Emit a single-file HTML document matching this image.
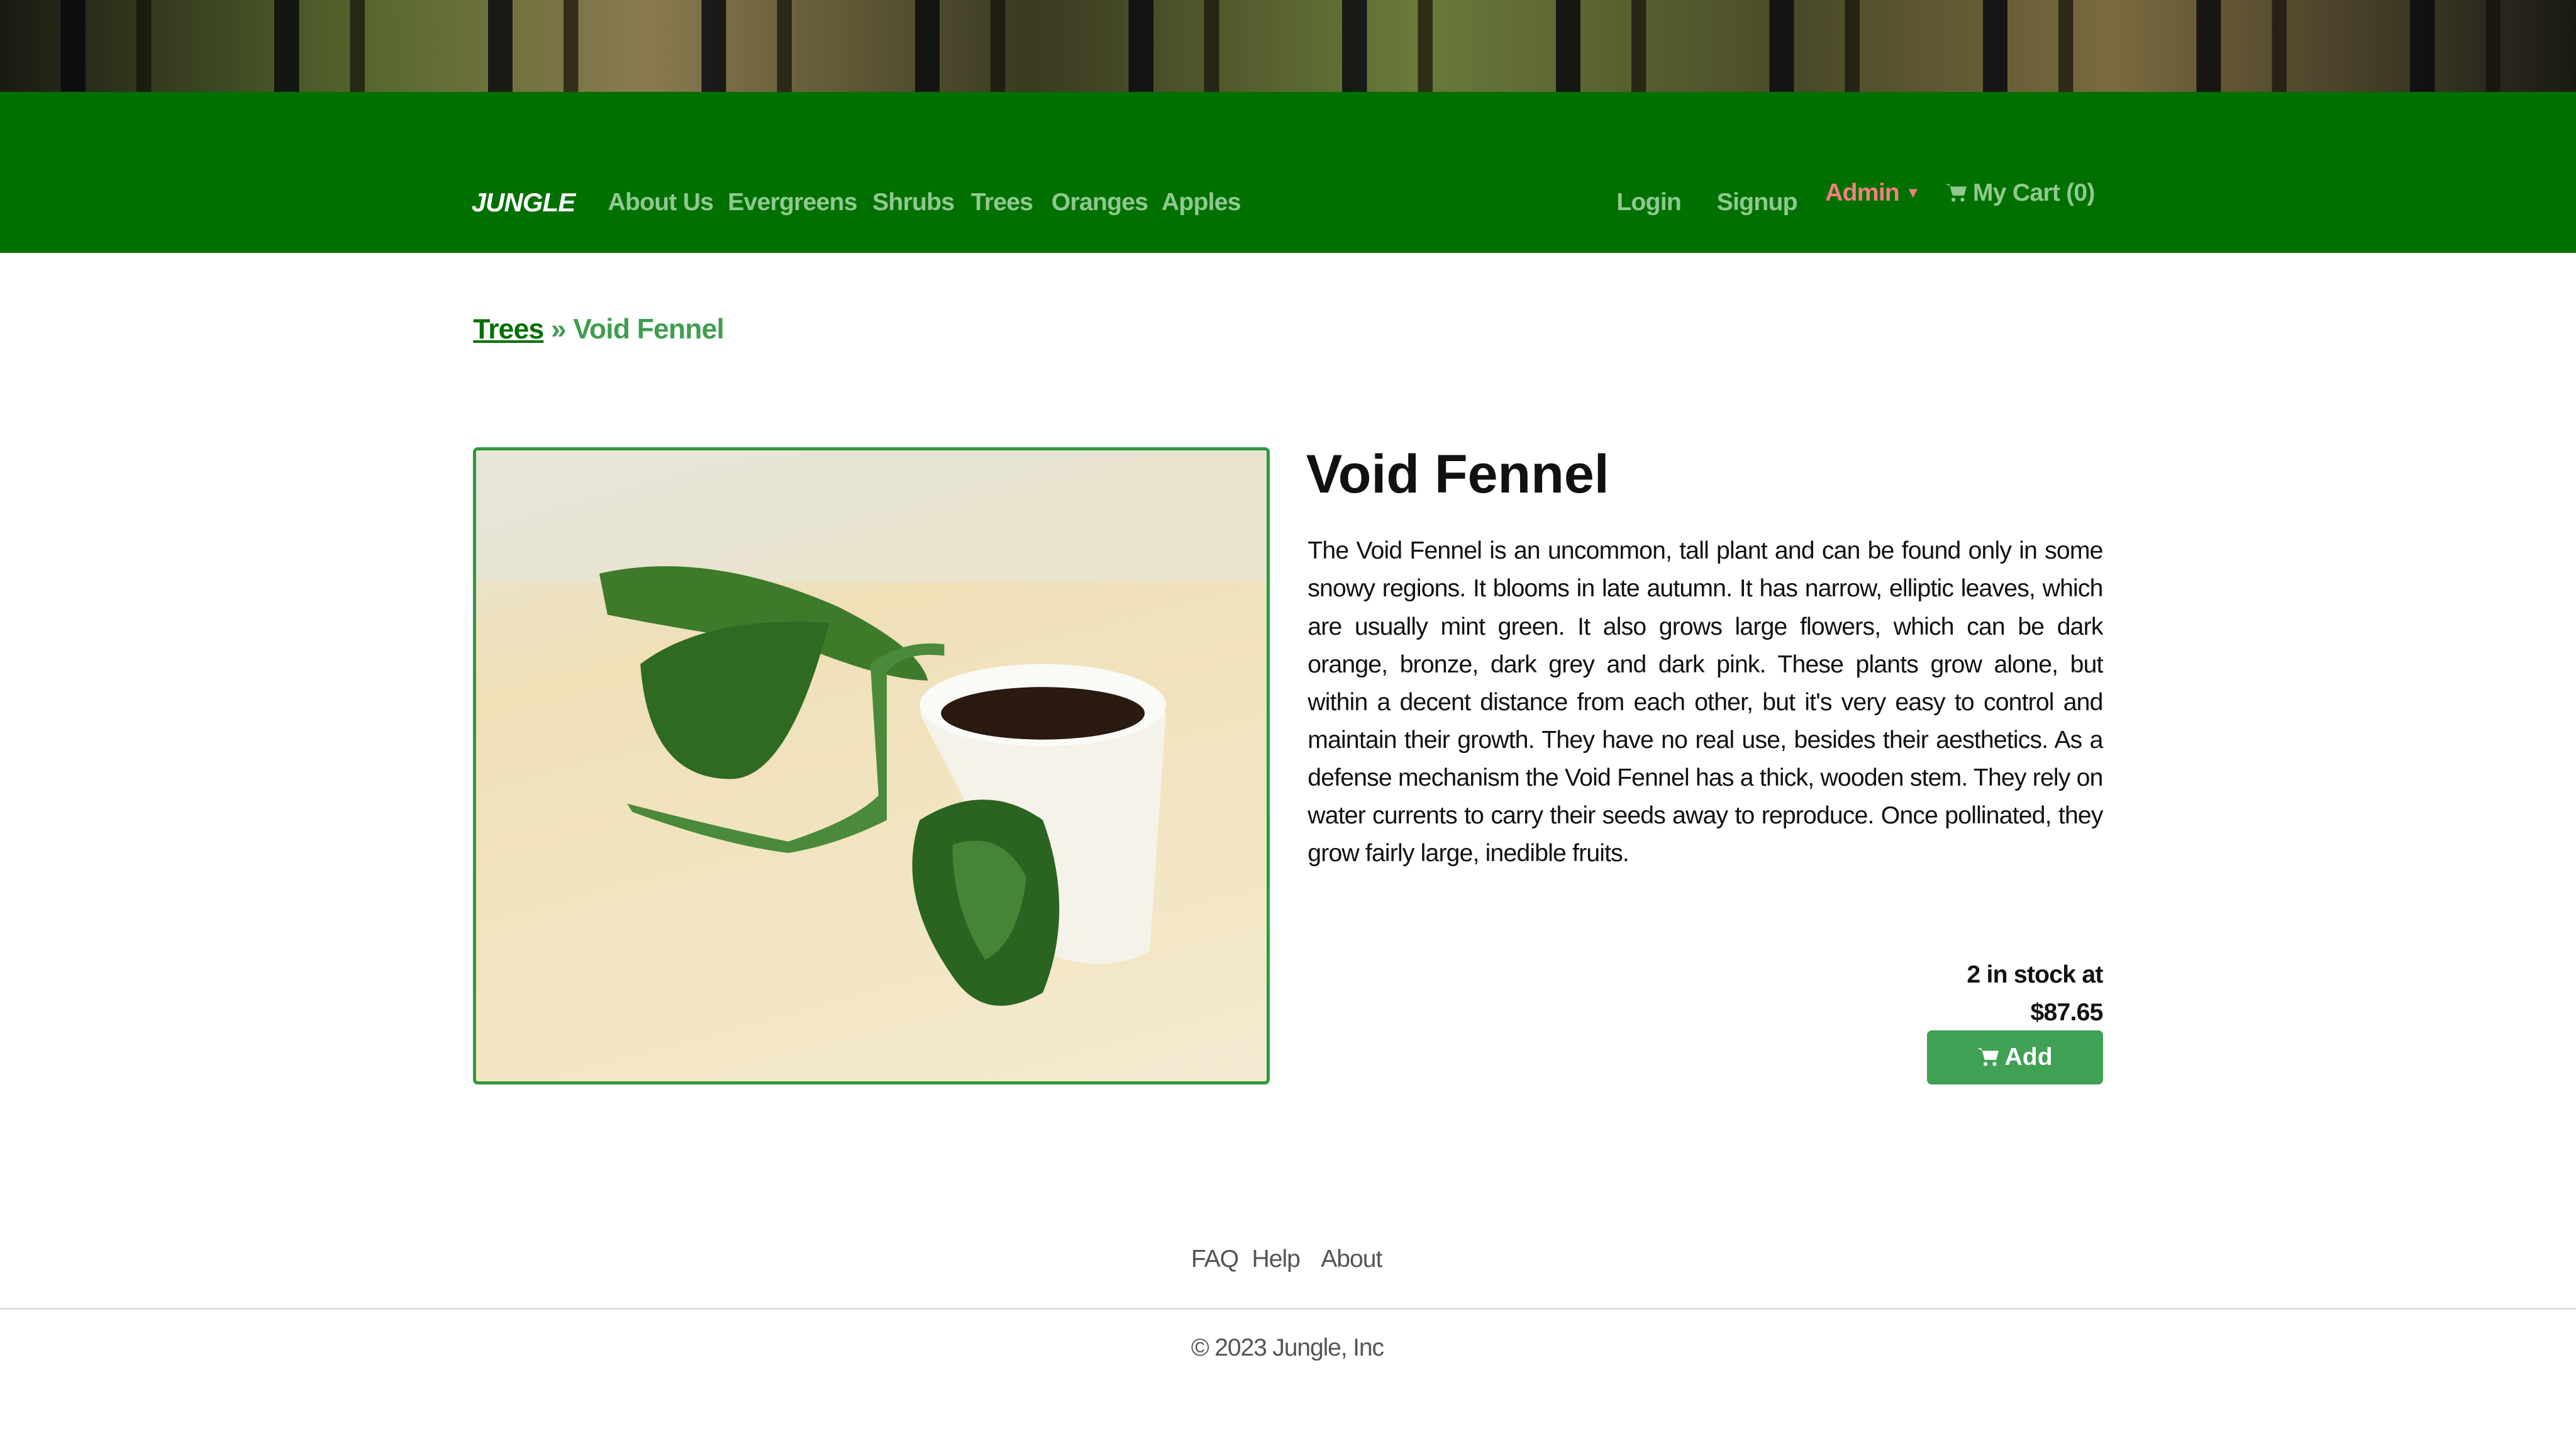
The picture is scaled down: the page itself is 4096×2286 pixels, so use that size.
<!DOCTYPE html>
<html><head><meta charset="utf-8"><style>
html,body{margin:0;padding:0;background:#fff}
body{width:4096px;height:2286px;overflow:hidden}
#w{zoom:2.6122;width:1568px;height:875px;position:relative;font-family:"Liberation Sans",sans-serif}
.a{position:absolute;white-space:nowrap}
#forest{position:absolute;left:0;top:0;width:1568px;height:56px;background:
repeating-linear-gradient(90deg,rgba(0,0,0,0) 0 37px,rgba(10,10,15,.85) 37px 52px,rgba(0,0,0,0) 52px 83px,rgba(20,15,10,.7) 83px 92px,rgba(0,0,0,0) 92px 130px),
linear-gradient(90deg,#1a1a12,#5a6a30 15%,#8a7a50 25%,#3a3a20 40%,#6a7a3a 55%,#4a4a28 70%,#7a6a40 82%,#1a1a14)}
#nav{position:absolute;left:0;top:56px;width:1568px;height:98px;background:#007000}
.n{color:#8fc98f;font-weight:bold;font-size:15px;top:115px;letter-spacing:-0.3px}
.p{font-size:15px;line-height:23px;color:#111;text-align:justify;width:484px;letter-spacing:-0.32px}
.f{font-size:15px;color:#555;letter-spacing:-0.4px;top:758px}
</style></head><body><div id="w">
<div id="forest"></div>
<div id="nav"></div>
<div class="a" style="left:287px;top:114px;color:#fff;font-weight:900;font-style:italic;font-size:16px;letter-spacing:-0.3px">JUNGLE</div>
<div class="a n" style="left:370px">About Us</div>
<div class="a n" style="left:443px">Evergreens</div>
<div class="a n" style="left:531px">Shrubs</div>
<div class="a n" style="left:591px">Trees</div>
<div class="a n" style="left:640px">Oranges</div>
<div class="a n" style="left:707px">Apples</div>
<div class="a n" style="left:984px">Login</div>
<div class="a n" style="left:1045px">Signup</div>
<div class="a n" style="left:1111px;top:109px;color:#f08080">Admin <span style="font-size:9px;vertical-align:2px">▼</span></div>
<div class="a n" style="left:1184px;top:109px"><svg width="13" height="12" viewBox="0 0 13 12" style="vertical-align:-1px"><path d="M0 1h2.5l2 7h7l1.5-5.5H3.5" fill="#8fc98f"/><circle cx="5" cy="10.5" r="1.2" fill="#8fc98f"/><circle cx="10.5" cy="10.5" r="1.2" fill="#8fc98f"/></svg> My Cart (0)</div>
<div class="a" style="left:288px;top:191px;font-size:17px;font-weight:bold;color:#3e9e50;letter-spacing:-0.3px"><span style="color:#007000;text-decoration:underline">Trees</span> » Void Fennel</div>
<div class="a" style="left:288px;top:272px;width:481px;height:384px;border:2px solid #2e9a3e;border-radius:3px;overflow:hidden;background:linear-gradient(165deg,#e8e4d4 0%,#efe0b8 30%,#f2e4c0 60%,#f4ead0 100%)">
<svg width="484" height="387" viewBox="0 0 484 387">
<rect x="0" y="0" width="484" height="80" fill="#e4e6dc" opacity=".6"/>
<path d="M270 160 Q330 140 420 160 L410 305 Q380 320 345 305 Z" fill="#f5f2ea"/>
<ellipse cx="345" cy="155" rx="75" ry="25" fill="#fafaf6"/>
<ellipse cx="345" cy="160" rx="62" ry="16" fill="#2a1a10"/>
<path d="M75 75 Q140 60 220 95 Q270 120 275 140 Q250 140 200 120 Q130 110 80 100 Z" fill="#3e7a2a"/>
<path d="M100 130 Q140 100 215 105 Q190 200 155 200 Q105 200 100 130 Z" fill="#2e6a22"/>
<path d="M240 130 Q260 115 285 118 L285 125 Q260 122 250 135 L250 225 Q220 240 190 245 Q150 240 95 220 L92 215 Q150 230 190 238 Q230 225 245 210 Z" fill="#4a8a3a"/>
<path d="M270 225 Q310 200 345 225 Q365 280 345 330 Q310 350 290 320 Q255 270 270 225 Z" fill="#2a6420"/>
<path d="M290 240 Q320 230 335 260 Q330 300 310 310 Q290 280 290 240 Z" fill="#5a9a4a" opacity=".6"/>
</svg></div>
<div class="a" style="left:795px;top:270px;font-size:33px;font-weight:bold;color:#111">Void Fennel</div>
<div class="a p" style="left:796px;top:324px;white-space:normal">The Void Fennel is an uncommon, tall plant and can be found only in some snowy regions. It blooms in late autumn. It has narrow, elliptic leaves, which are usually mint green. It also grows large flowers, which can be dark orange, bronze, dark grey and dark pink. These plants grow alone, but within a decent distance from each other, but it's very easy to control and maintain their growth. They have no real use, besides their aesthetics. As a defense mechanism the Void Fennel has a thick, wooden stem. They rely on water currents to carry their seeds away to reproduce. Once pollinated, they grow fairly large, inedible fruits.</div>
<div class="a" style="right:288px;top:582px;font-size:15px;font-weight:bold;color:#111;text-align:right;line-height:23px;letter-spacing:-0.3px">2 in stock at<br>$87.65</div>
<div class="a" style="left:1173px;top:627px;width:107px;height:33px;background:#40a054;border-radius:3px;color:#fff;font-weight:bold;font-size:15px;text-align:center;line-height:33px"><svg width="13" height="12" viewBox="0 0 13 12" style="vertical-align:-1px"><path d="M0 1h2.5l2 7h7l1.5-5.5H3.5" fill="#fff"/><circle cx="5" cy="10.5" r="1.2" fill="#fff"/><circle cx="10.5" cy="10.5" r="1.2" fill="#fff"/></svg> Add</div>
<div class="a f" style="left:725px">FAQ</div>
<div class="a f" style="left:762px">Help</div>
<div class="a f" style="left:804px">About</div>
<div class="a" style="left:0;top:796px;width:1568px;height:1px;background:#ddd"></div>
<div class="a" style="left:725px;top:812px;font-size:15px;color:#555;letter-spacing:-0.45px">© 2023 Jungle, Inc</div>
</div></body></html>
